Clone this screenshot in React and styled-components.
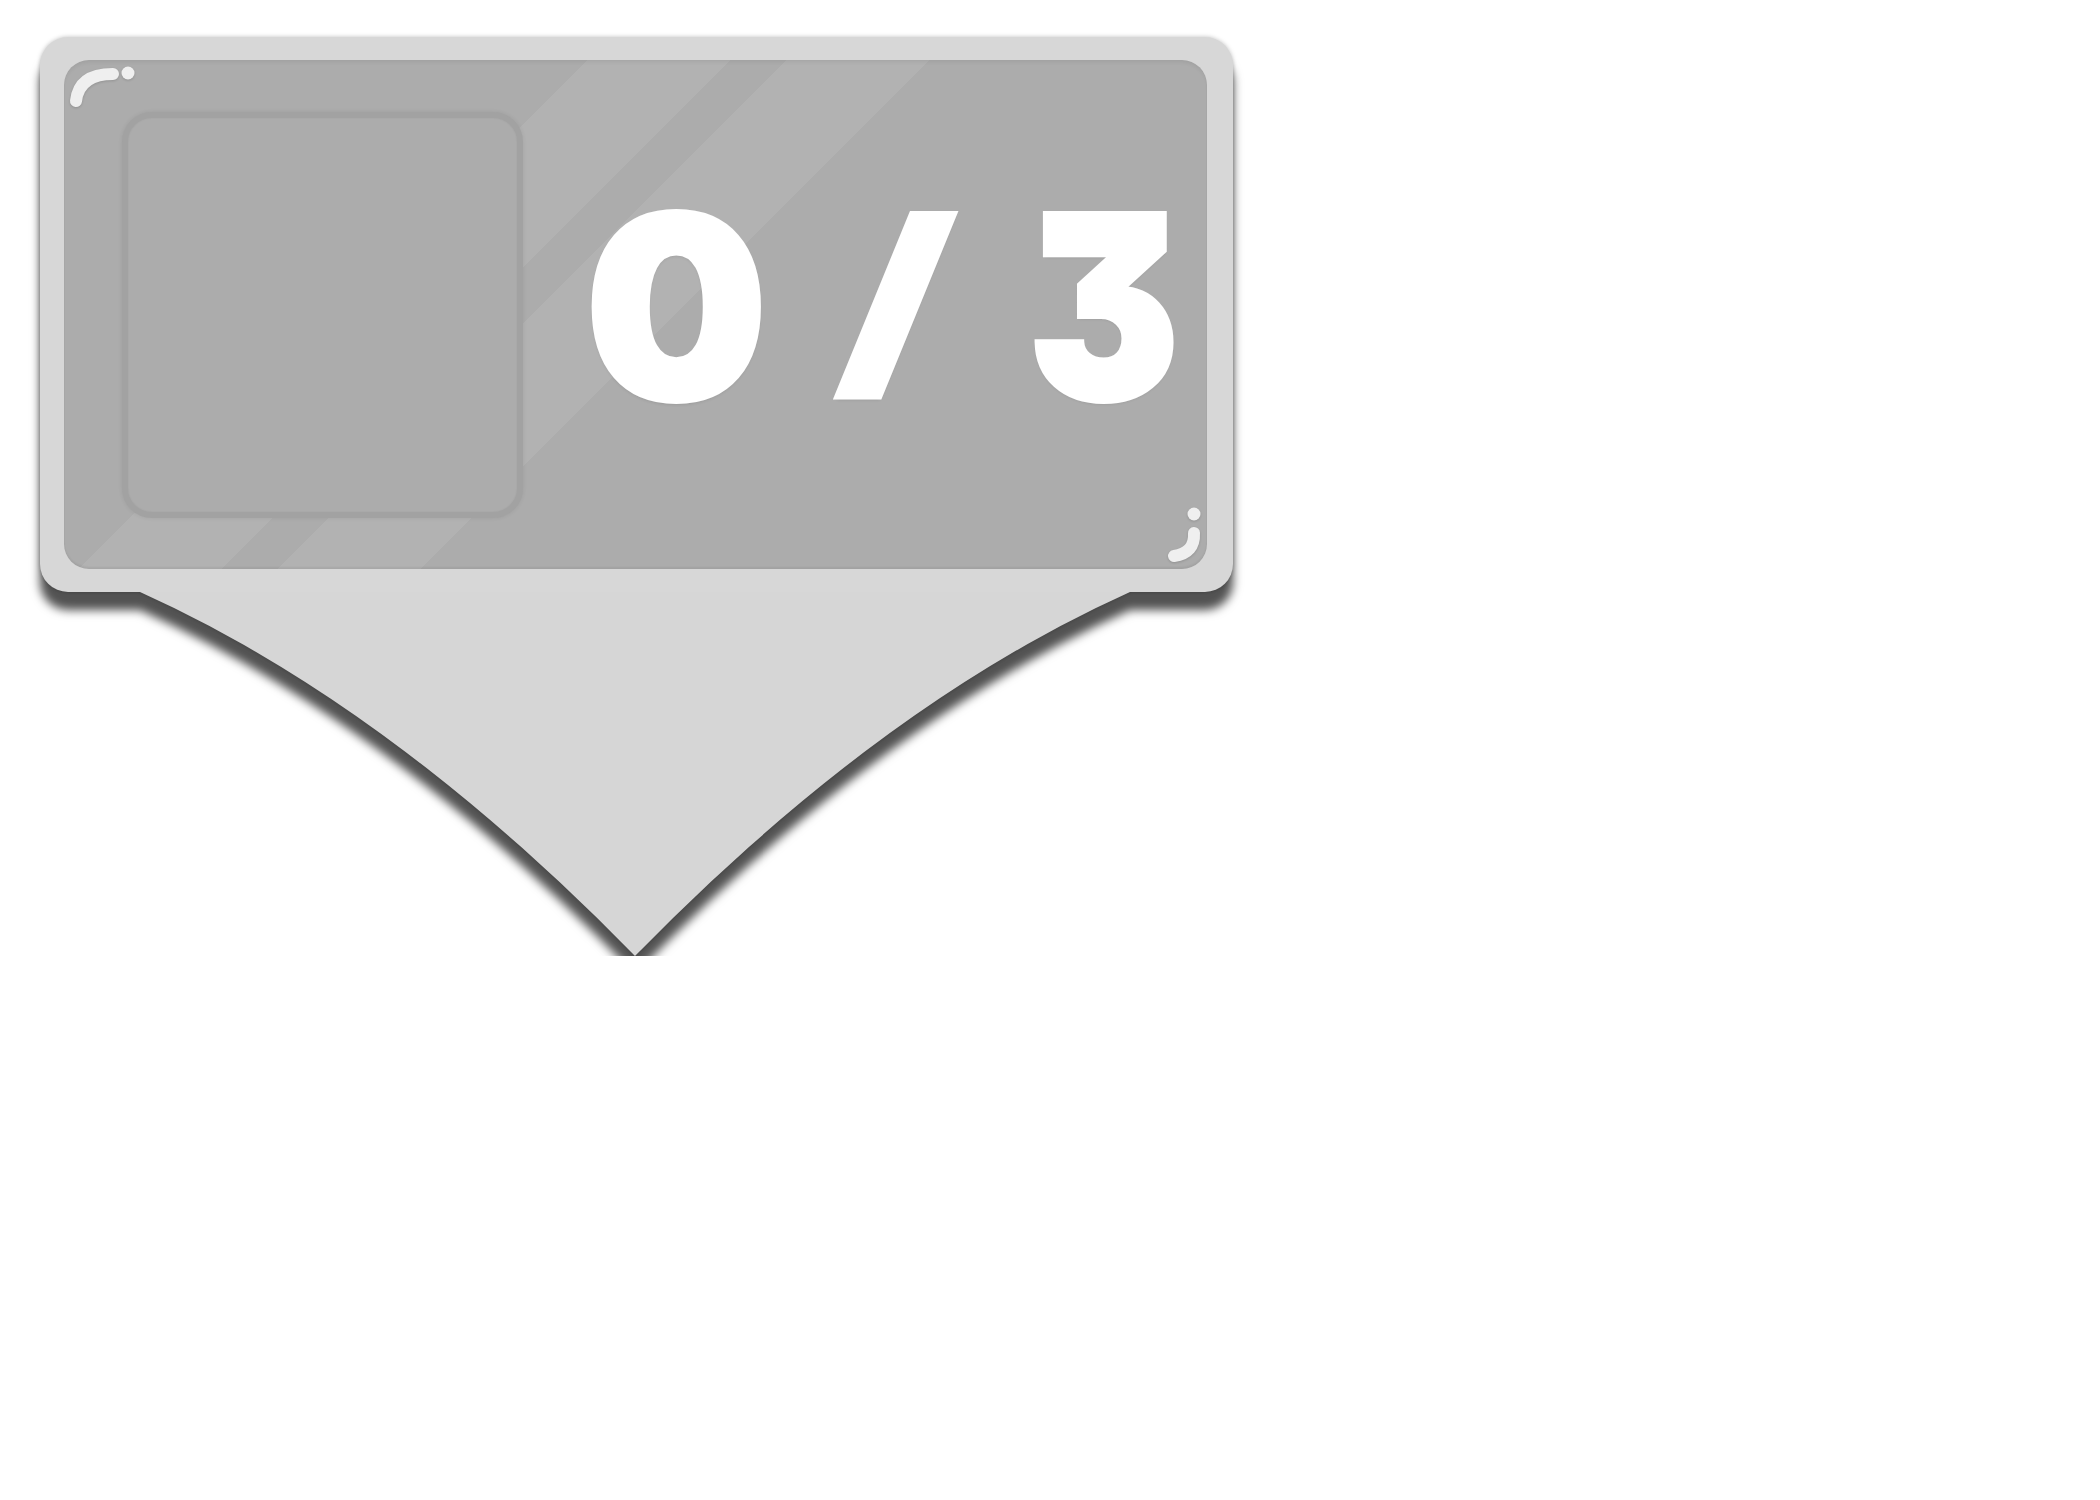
import React from 'react';
import styled, { createGlobalStyle } from 'styled-components';

const GlobalStyle = createGlobalStyle`
  html, body {
    margin: 0;
    padding: 0;
    background: #fff;
  }
  body {
    font-family: Inter, "Noto Sans", sans-serif;
  }
`

const Page = styled.div`
  padding: 37px 0 0 40px;
`

const Marker = styled.div`
  width: 1193px;
  display: flex;
  flex-direction: column;
  filter: drop-shadow(0 0 2px rgba(0, 0, 0, 0.25)) drop-shadow(0 18px 5px rgba(0, 0, 0, 0.68));
`

const Frame = styled.div`
  background: #d7d7d7;
  border-radius: 28px;
  padding: 23px 26px 23px 24px;
  position: relative;
  z-index: 1;
`

const Screen = styled.div`
  position: relative;
  display: flex;
  align-items: center;
  height: 509px;
  box-sizing: border-box;
  padding: 0 30px 0 58px;
  border-radius: 25px;
  background-color: #acacac;
  background-image: linear-gradient(
    135deg,
    transparent 370px,
    rgba(255, 255, 255, 0.075) 370px,
    rgba(255, 255, 255, 0.075) 471px,
    transparent 471px,
    transparent 511px,
    rgba(255, 255, 255, 0.075) 511px,
    rgba(255, 255, 255, 0.075) 612px,
    transparent 612px
  );
  box-shadow:
    inset 0 4px 4px -2px rgba(0, 0, 0, 0.07),
    inset 0 -2px 2px rgba(0, 0, 0, 0.06);
`

const Slot = styled.div`
  width: 401px;
  height: 406px;
  flex: none;
  box-sizing: border-box;
  border: 6px solid #a2a2a2;
  border-radius: 30px;
  background: #acacac;
  box-shadow: 0 0 4px rgba(0, 0, 0, 0.08), inset 0 0 2px rgba(0, 0, 0, 0.05);
`

const Score = styled.div`
  display: flex;
  align-items: center;
  margin-left: 63px;
  margin-top: -16px;
  color: #fff;
  font-family: Inter, "Noto Sans", sans-serif;
  font-weight: 900;
  font-size: 254px;
  line-height: 1;
  font-feature-settings: "cv09" 1;
  text-shadow: 0 2px 4px rgba(0, 0, 0, 0.22);
  -webkit-text-stroke: 6px #fff;
`

const Digit = styled.span`
  display: inline-block;
  transform-origin: left center;
  transform: scaleX(${p => p.$squeeze || 1});
`

const Slash = styled.span`
  display: inline-block;
  margin: 0 81px 0 77px;
  transform: translateY(-9px) scaleY(0.83) skewX(-4deg);
`

const Glint = styled.svg`
  position: absolute;
  ${p => (p.$corner === 'top' ? 'top: 0; left: 0;' : 'bottom: 0; right: 0;')}
  filter: drop-shadow(0 1px 1px rgba(0, 0, 0, 0.15));
`

const Tail = styled.svg`
  display: block;
  margin-top: -2px;
`

function App() {
  return (
    <Page>
      <GlobalStyle />
      <Marker>
        <Frame>
          <Screen>
            <Glint $corner="top" width="80" height="50" viewBox="0 0 80 50">
              <path d="M12 41 Q15 14 49 14" fill="none" stroke="#efefef" strokeWidth="12" strokeLinecap="round" />
              <circle cx="64" cy="13" r="6.5" fill="#efefef" />
            </Glint>
            <Slot />
            <Score>
              <Digit>0</Digit>
              <Slash>/</Slash>
              <Digit $squeeze={0.88}>3</Digit>
            </Score>
            <Glint $corner="bottom" width="50" height="70" viewBox="0 0 50 70">
              <circle cx="37" cy="15" r="6.5" fill="#efefef" />
              <path d="M37 34 Q38 54 17 57" fill="none" stroke="#efefef" strokeWidth="12" strokeLinecap="round" />
            </Glint>
          </Screen>
        </Frame>
        <Tail width="1193" height="366" viewBox="0 -2 1193 366">
          <path d="M100 -2 L100 0 Q349 112 595 364 Q841 112 1090 0 L1090 -2 Z" fill="#d6d6d6" />
        </Tail>
      </Marker>
    </Page>
  );
}

export default App;
